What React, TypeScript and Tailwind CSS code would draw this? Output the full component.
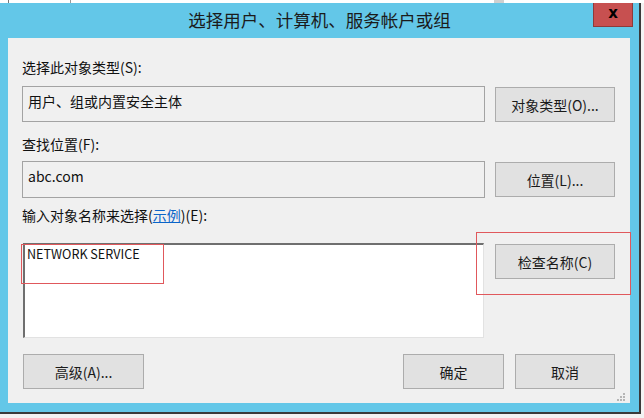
import React from 'react';

function Btn({ children, className = '' }: { children: React.ReactNode; className?: string }) {
  return (
    <button
      type="button"
      className={`h-[35px] border border-[#acacac] bg-[#e1e1e1] text-[14px] leading-[20px] text-[#1a1a1a] flex items-center justify-center ${className}`}
    >
      {children}
    </button>
  );
}

export default function App() {
  return (
    <div className="w-[644px] h-[418px] bg-white overflow-hidden flex flex-col font-['Noto_Sans_CJK_SC',sans-serif]">
      {/* background window behind the dialog */}
      <div className="h-[3px] flex bg-white">
        <div className="w-[9px] border-r border-[#777]" />
        <div className="w-[62px] border-r border-[#999]" />
        <div className="flex-1" />
        <div className="w-[10px] bg-[#d0d0d0]" />
        <div className="w-[140px]" />
      </div>

      <div className="flex">
        {/* dialog frame */}
        <div className="w-[641px] h-[411px] bg-[#63c7e8] border-r-2 border-b-2 border-[#3a3a3a] flex flex-col">
          {/* title bar */}
          <div className="relative h-[35px] flex items-center justify-center">
            <span className="text-[17.5px] leading-[24px] text-[#1b1b1b] mt-[-1px]">选择用户、计算机、服务帐户或组</span>
            <div className="absolute right-[6px] top-0 w-[40px] h-[24px] bg-[#c75050] border border-[#8e3a3a] border-t-0 flex items-center justify-center">
              <span className="text-[15px] font-bold leading-none text-black font-['DejaVu_Sans',sans-serif] mt-[-2px]">x</span>
            </div>
          </div>

          {/* client area */}
          <div className="relative ml-[8px] w-[622px] h-[365px] bg-[#f0f0f0] pl-[14px] pr-[15px] pt-[19px] flex flex-col text-[14px] text-[#111]">
            <div className="h-[20px] leading-[20px]">选择此对象类型(S):</div>
            <div className="mt-[9px] flex items-start">
              <div className="w-[463px] h-[36px] border border-[#a3a3a3] px-[5px] leading-[28px]">用户、组或内置安全主体</div>
              <Btn className="ml-auto mt-[1px] w-[120px]">对象类型(O)...</Btn>
            </div>

            <div className="mt-[12px] h-[20px] leading-[20px]">查找位置(F):</div>
            <div className="mt-[7px] flex items-start">
              <div className="w-[463px] h-[37px] border border-[#a3a3a3] px-[5px] leading-[28px]">abc.com</div>
              <Btn className="ml-auto mt-[1px] w-[120px]">位置(L)...</Btn>
            </div>

            <div className="mt-[7px] h-[20px] leading-[20px]">
              输入对象名称来选择(<span className="text-[#0a64c8] underline">示例</span>)(E):
            </div>
            <div className="mt-[18px] flex items-start">
              <div className="relative ml-[1px] w-[461px] h-[95px] bg-white border-t-2 border-l-2 border-t-[#6f6f6f] border-l-[#6f6f6f] border-r border-b border-r-[#e2e2e2] border-b-[#e2e2e2] px-[2px]">
                <div className="text-[12.6px] leading-[18px] text-[#111]">NETWORK SERVICE</div>
                <div className="absolute left-[-4px] top-[-1px] w-[143px] h-[40px] border-[1.5px] border-[#e0585c]" />
              </div>
              <div className="relative ml-auto mt-[1px]">
                <Btn className="w-[120px]">检查名称(C)</Btn>
                <div className="absolute left-[-19px] top-[-12px] w-[155px] h-[63px] border-[1.5px] border-[#e0585c]" />
              </div>
            </div>

            <div className="mt-[16px] flex items-start">
              <Btn className="ml-[1px] w-[121px]">高级(A)...</Btn>
              <Btn className="ml-auto w-[101px]">确定</Btn>
              <Btn className="ml-[11px] w-[100px]">取消</Btn>
            </div>

            {/* size grip */}
            <svg className="absolute right-[4px] bottom-[1px]" width="10" height="10" viewBox="0 0 10 10">
              <g fill="#b5b5b5">
                <rect x="7" y="1" width="2" height="2" />
                <rect x="4" y="4" width="2" height="2" />
                <rect x="7" y="4" width="2" height="2" />
                <rect x="1" y="7" width="2" height="2" />
                <rect x="4" y="7" width="2" height="2" />
                <rect x="7" y="7" width="2" height="2" />
              </g>
            </svg>
          </div>
        </div>
        <div className="flex-1 bg-[#f4f4f4]" />
      </div>
      <div className="flex-1 bg-[#f2f2f2]" />
    </div>
  );
}
